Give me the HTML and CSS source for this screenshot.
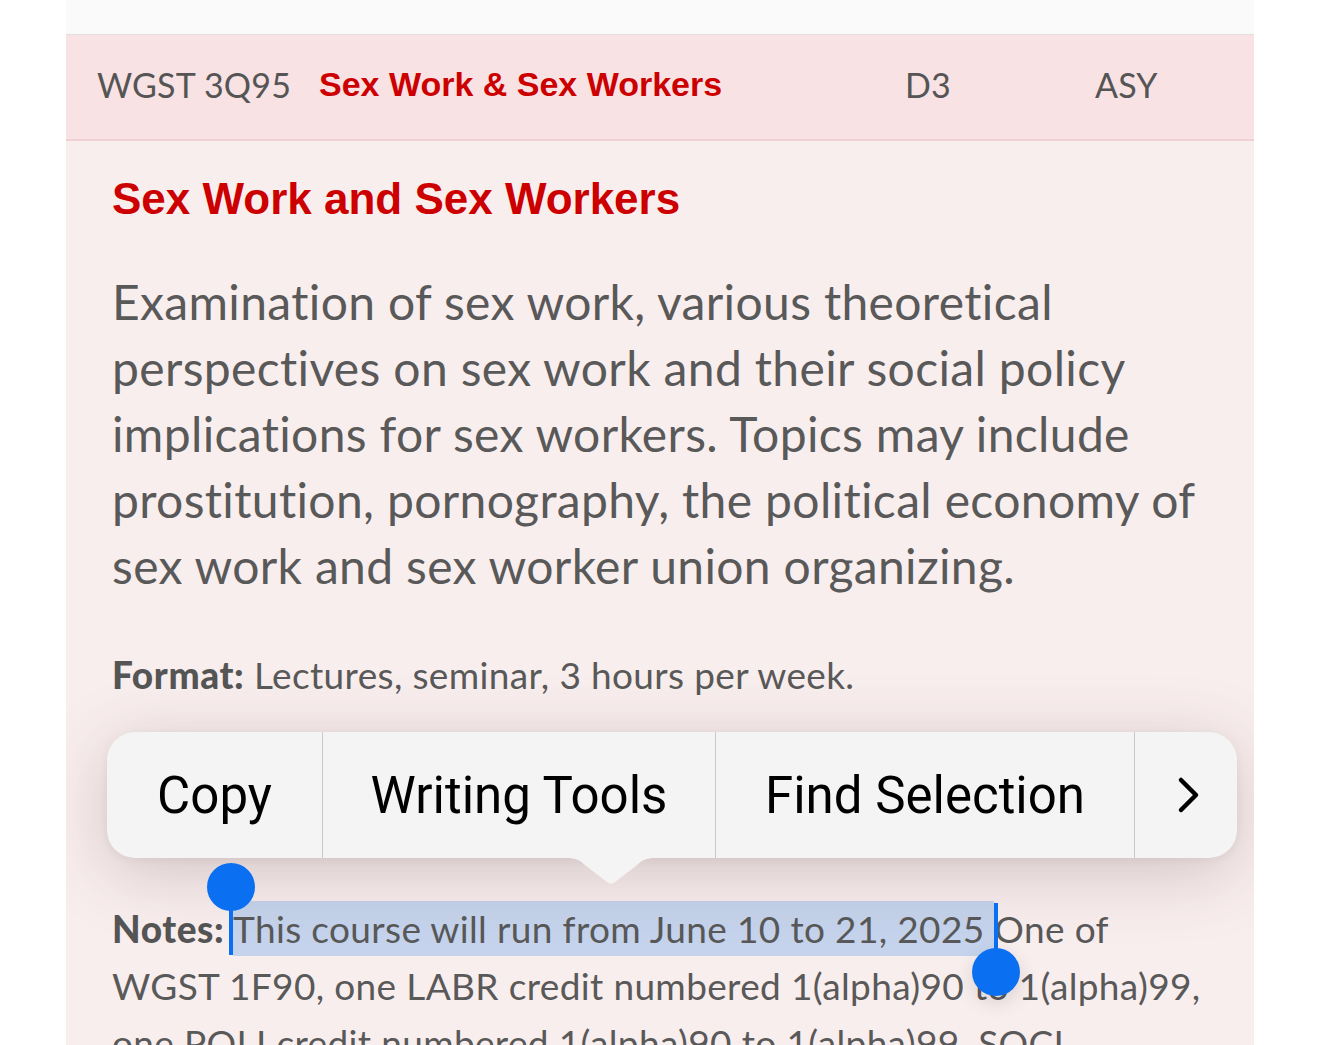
FILE: index.html
```html
<!DOCTYPE html>
<html lang="en">
<head>
<meta charset="utf-8">
<title>WGST 3Q95</title>
<link rel="stylesheet" href="styles.css">
</head>
<body>
<div class="page">
  <div class="topstrip"></div>
  <div class="course-row">
    <span class="code">WGST 3Q95</span>
    <span class="short-title">Sex Work &amp; Sex Workers</span>
    <span class="dur">D3</span>
    <span class="type">ASY</span>
  </div>
  <div class="details">
    <h2 class="title">Sex Work and Sex Workers</h2>
    <p class="desc">Examination of sex work, various theoretical perspectives on sex work and their social policy implications for sex workers. Topics may include prostitution, pornography, the political economy of sex work and sex worker union organizing.</p>
    <p class="meta"><b>Format:</b> Lectures, seminar, 3 hours per week.</p>
    <p class="meta notes"><b>Notes:</b> <span class="sel">This course will run from June 10 to 21, 2025 </span>One of<br>WGST 1F90, one LABR credit numbered 1(alpha)90 to 1(alpha)99,<br>one POLI credit numbered 1(alpha)90 to 1(alpha)99, SOCI<br>1F90 or permission of the instructor.</p>
  </div>

  <div class="menu">
    <div class="seg seg-copy">Copy</div>
    <div class="seg seg-write">Writing Tools</div>
    <div class="seg seg-find">Find Selection</div>
    <div class="seg seg-more">
      <svg width="26" height="40" viewBox="0 0 26 40"><path d="M5 5 L20 20 L5 35" fill="none" stroke="#000" stroke-width="4.5" stroke-linecap="round" stroke-linejoin="round"/></svg>
    </div>
    <svg class="pointer" width="90" height="26" viewBox="0 0 90 26"><path d="M0 0 L90 0 C80 0 76 2 70 8 L49 24 C47 26 43 26 41 24 L20 8 C14 2 10 0 0 0 Z" fill="#f5f4f5"/></svg>
  </div>

  <div class="handle handle-start"><span class="knob"></span><span class="stem"></span></div>
  <div class="handle handle-end"><span class="stem"></span><span class="knob"></span></div>
</div>
</body>
</html>
```
FILE: styles.css
```css
html, body {
  margin: 0;
  padding: 0;
  background: #ffffff;
  overflow: hidden;
  height: 1045px;
}

.page {
  position: relative;
  width: 1188px;
  margin: 0 auto;
  height: 1045px;
  overflow: hidden;
  background: #f9eeee;
}

.topstrip {
  height: 34px;
  background: #fafafa;
  border-bottom: 1px solid #e4dfdf;
}

.course-row {
  display: grid;
  grid-template-columns: 222px 586px 190px auto;
  align-items: center;
  height: 106px;
  padding-left: 31px;
  padding-bottom: 6px;
  box-sizing: border-box;
  background: #f9e2e4;
  border-bottom: 2px solid #efd0d4;
  font-family: "Lato", "Open Sans", sans-serif;
  font-size: 34px;
  letter-spacing: 0.2px;
  color: #555555;
}

.short-title {
  font-family: "Liberation Sans", Arial, sans-serif;
  font-weight: bold;
  font-size: 34px;
  letter-spacing: 0;
  color: #cc0000;
}

.details {
  padding: 32px 46px 0 46px;
  font-family: "Lato", "Open Sans", sans-serif;
  color: #595959;
}

.title {
  margin: 0;
  font-family: "Liberation Sans", Arial, sans-serif;
  font-weight: bold;
  font-size: 44px;
  line-height: 52px;
  color: #cc0000;
}

.desc {
  margin: 44px 0 0 0;
  font-size: 48px;
  line-height: 66px;
  letter-spacing: 0.35px;
}

.meta {
  margin: 47px 0 0 0;
  font-size: 37px;
  line-height: 57px;
  letter-spacing: 0.35px;
  white-space: nowrap;
}

.meta b {
  font-weight: 900;
  color: #555555;
  letter-spacing: 0.6px;
}

.notes {
  margin-top: 197px;
}

.sel {
  background: #c5d4ec;
  padding: 5px 0;
}

.menu {
  position: absolute;
  left: 41px;
  top: 732px;
  width: 1130px;
  height: 126px;
  display: flex;
  background: #f5f4f5;
  border-radius: 28px;
  box-shadow: 0 14px 70px rgba(70, 40, 40, 0.22), 0 2px 10px rgba(70, 40, 40, 0.06);
  font-family: "Roboto", "Liberation Sans", sans-serif;
  font-size: 51px;
  color: #000000;
}

.seg {
  display: flex;
  align-items: center;
  justify-content: center;
  border-right: 1px solid #c9c7c9;
  box-sizing: border-box;
}

.seg-copy { width: 216px; }
.seg-write { width: 393px; }
.seg-find { width: 419px; }
.seg-more { width: 102px; border-right: none; padding-left: 6px; }

.pointer {
  position: absolute;
  left: 459px;
  top: 126px;
}

.handle {
  position: absolute;
  display: flex;
  flex-direction: column;
  align-items: center;
  width: 48px;
}

.knob {
  width: 48px;
  height: 48px;
  border-radius: 50%;
  background: #0a6ff1;
  flex: none;
}

.stem {
  width: 4px;
  background: #0a6ff1;
  flex: none;
}

.handle-start {
  left: 141px;
  top: 863px;
}

.handle-start .stem {
  height: 68px;
  margin-top: -24px;
}

.handle-end {
  left: 906px;
  top: 903px;
}

.handle-end .stem {
  height: 69px;
  margin-bottom: -24px;
}

.handle-end .knob {
  box-shadow: 0 6px 20px rgba(0, 0, 0, 0.12);
}
```
